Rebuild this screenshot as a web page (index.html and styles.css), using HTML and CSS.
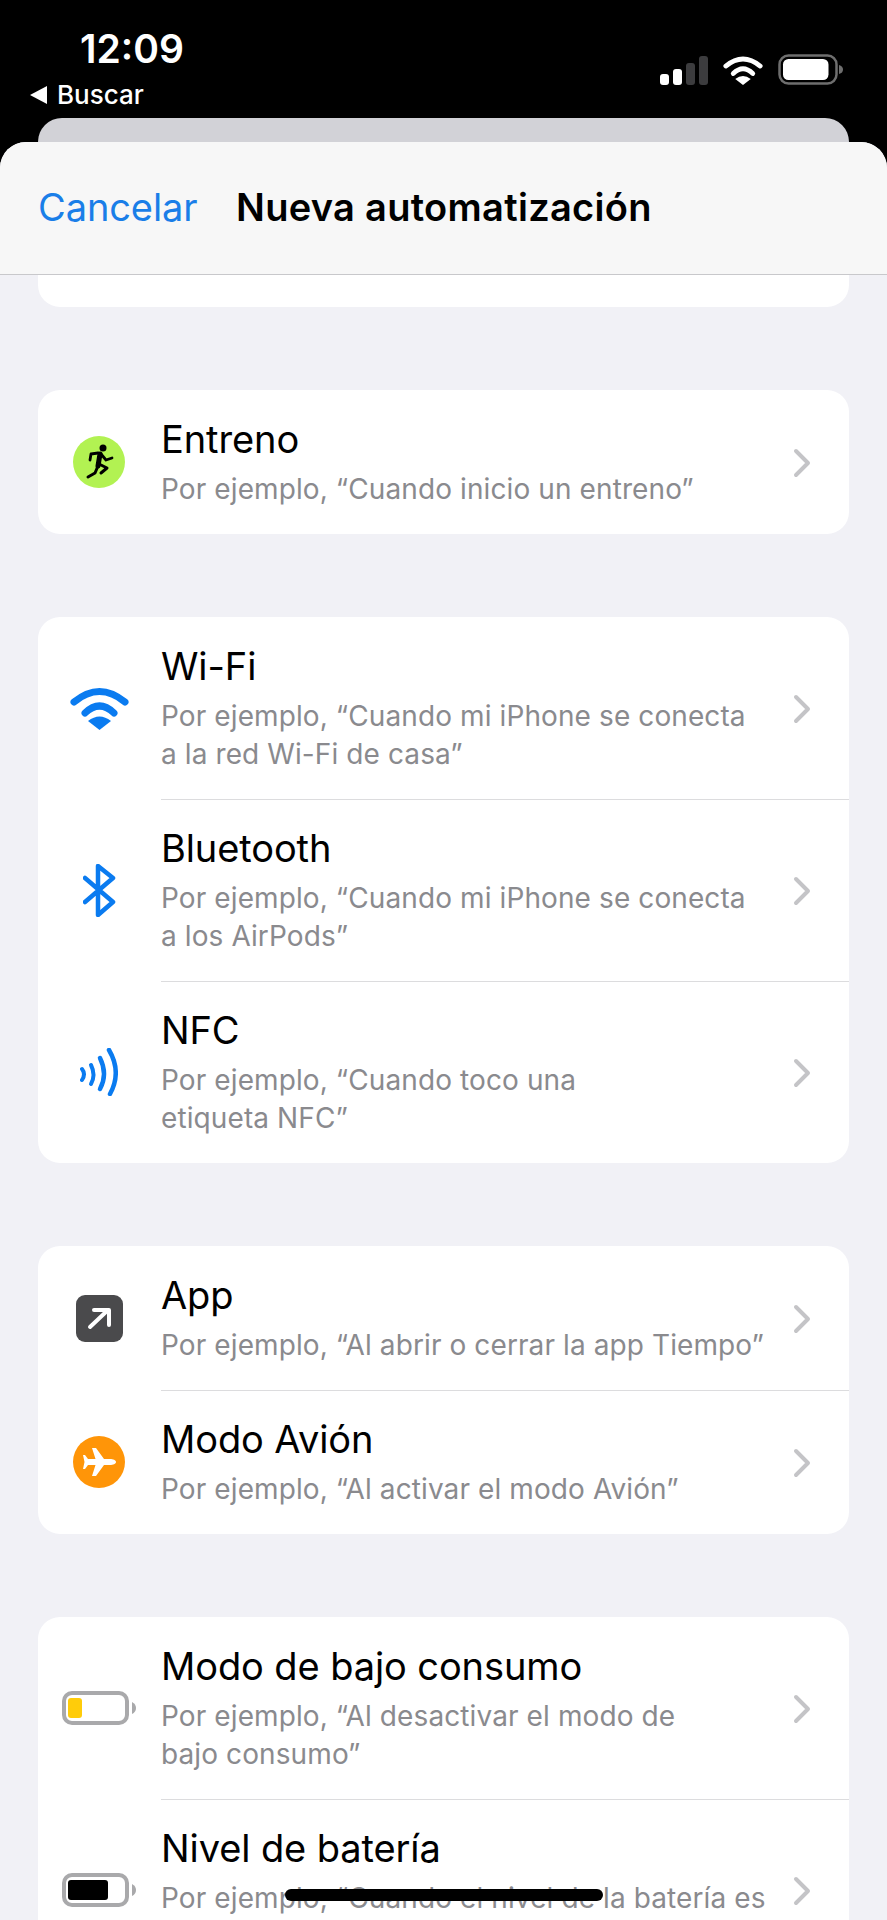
FILE: index.html
```html
<!DOCTYPE html>
<html lang="es">
<head>
<meta charset="utf-8">
<title>Nueva automatización</title>
<link rel="stylesheet" href="styles.css">
</head>
<body>
<div class="screen">
  <header class="status">
    <div class="status-left">
      <div class="time">12:09</div>
      <div class="back"><span class="back-tri"></span><span>Buscar</span></div>
    </div>
    <div class="status-right">
      <div class="bars"><i class="b1"></i><i class="b2"></i><i class="b3"></i><i class="b4"></i></div>
      <svg class="st-wifi" viewBox="0 0 59 43"><g fill="none" stroke="currentColor" stroke-width="7" stroke-linecap="round"><path d="M4 15Q29.500 -6 55 15"/><path d="M15 26Q29.500 12 44 26"/></g><path fill="currentColor" d="M29.500 43L18 34Q29.500 25 41 34Z"/></svg>
      <svg class="st-batt" viewBox="0 0 65 31"><rect x="1.500" y="1.500" width="57" height="28" rx="9" fill="none" stroke="#6e6e6e" stroke-width="2.500"/><rect x="5" y="5" width="45.500" height="21" rx="5.500" fill="#fff"/><path d="M61 11q4 1 4 4.500t-4 4.500z" fill="#6e6e6e"/></svg>
    </div>
  </header>
  <div class="behind"></div>
  <div class="sheet">
    <nav class="nav">
      <span class="cancel">Cancelar</span>
      <span class="nav-title">Nueva automatización</span>
    </nav>
    <div class="stub"></div>

    <section class="card">
      <div class="row">
        <div class="icon">
          <svg width="52" height="52" viewBox="0 0 52 52"><circle cx="26" cy="26" r="26" fill="#b2f252"/><circle cx="30" cy="12" r="3.500" fill="#000"/><g fill="none" stroke="#000" stroke-linecap="round" stroke-linejoin="round"><path stroke-width="5" d="M27 18L25 30"/><path stroke-width="2.800" d="M28 18L33 24L39 22M25 17L18 18L17 24"/><path stroke-width="3" d="M25 30L22 37L15 41M26 28L34 32L28 37"/></g></svg>
        </div>
        <div class="body">
          <div class="text"><div class="title">Entreno</div><div class="sub">Por ejemplo, “Cuando inicio un entreno”</div></div>
          <svg class="chev" viewBox="0 0 18 30"><path d="M3 3L15 15L3 27"/></svg>
        </div>
      </div>
    </section>

    <section class="card">
      <div class="row">
        <div class="icon">
          <svg class="blue" width="59" height="43" viewBox="0 0 59 43"><g fill="none" stroke="currentColor" stroke-width="7" stroke-linecap="round"><path d="M4 15Q29.500 -6 55 15"/><path d="M15 26Q29.500 12 44 26"/></g><path fill="currentColor" d="M29.500 43L18 34Q29.500 25 41 34Z"/></svg>
        </div>
        <div class="body">
          <div class="text"><div class="title">Wi-Fi</div><div class="sub">Por ejemplo, “Cuando mi iPhone se conecta<br>a la red Wi-Fi de casa”</div></div>
          <svg class="chev" viewBox="0 0 18 30"><path d="M3 3L15 15L3 27"/></svg>
        </div>
      </div>
      <div class="row">
        <div class="icon">
          <svg class="blue" width="33" height="53" viewBox="0 0 33 53"><path fill="none" stroke="currentColor" stroke-width="4.500" stroke-linecap="round" stroke-linejoin="round" d="M2 14L30 38L15 51V2L30 14L2 38"/></svg>
        </div>
        <div class="body">
          <div class="text"><div class="title">Bluetooth</div><div class="sub">Por ejemplo, “Cuando mi iPhone se conecta<br>a los AirPods”</div></div>
          <svg class="chev" viewBox="0 0 18 30"><path d="M3 3L15 15L3 27"/></svg>
        </div>
      </div>
      <div class="row">
        <div class="icon">
          <svg class="blue" width="38" height="48" viewBox="0 0 38 48"><g fill="none" stroke="currentColor" stroke-linecap="round"><path stroke-width="4.500" d="M29 2Q42 24 30 46"/><path stroke-width="4.500" d="M20 10Q28 26 20 41"/><path stroke-width="4" d="M11 17Q16 27 11 36"/><path stroke-width="4" d="M2 21Q6 26 2 32"/></g></svg>
        </div>
        <div class="body">
          <div class="text"><div class="title">NFC</div><div class="sub">Por ejemplo, “Cuando toco una<br>etiqueta NFC”</div></div>
          <svg class="chev" viewBox="0 0 18 30"><path d="M3 3L15 15L3 27"/></svg>
        </div>
      </div>
    </section>

    <section class="card">
      <div class="row">
        <div class="icon">
          <svg width="47" height="47" viewBox="0 0 47 47"><rect width="47" height="47" rx="9" fill="#4a4a4c"/><path fill="none" stroke="#fff" stroke-width="4" stroke-linecap="round" stroke-linejoin="round" d="M14 32L32 15M18 15H33V30"/></svg>
        </div>
        <div class="body">
          <div class="text"><div class="title">App</div><div class="sub">Por ejemplo, “Al abrir o cerrar la app Tiempo”</div></div>
          <svg class="chev" viewBox="0 0 18 30"><path d="M3 3L15 15L3 27"/></svg>
        </div>
      </div>
      <div class="row">
        <div class="icon">
          <svg width="52" height="52" viewBox="0 0 52 52"><circle cx="26" cy="26" r="26" fill="#ff9508"/><path fill="#fff" d="M43 26c0-2-3-3-6-3h-6L23 12h-4l3.500 11H15l-3-4h-2l1.500 7L10 33h2l3-4h7.500L19 40h4l8-11h6c3 0 6-1 6-3z"/></svg>
        </div>
        <div class="body">
          <div class="text"><div class="title">Modo Avión</div><div class="sub">Por ejemplo, “Al activar el modo Avión”</div></div>
          <svg class="chev" viewBox="0 0 18 30"><path d="M3 3L15 15L3 27"/></svg>
        </div>
      </div>
    </section>

    <section class="card">
      <div class="row">
        <div class="icon">
          <svg width="74" height="34" viewBox="0 0 74 34"><rect x="2" y="2" width="63" height="30" rx="8" fill="none" stroke="#a9a9ab" stroke-width="4"/><rect x="6" y="7" width="14" height="20" rx="3" fill="#ffcc0a"/><path d="M70 11q4 2 4 6t-4 6z" fill="#a9a9ab"/></svg>
        </div>
        <div class="body">
          <div class="text"><div class="title">Modo de bajo consumo</div><div class="sub">Por ejemplo, “Al desactivar el modo de<br>bajo consumo”</div></div>
          <svg class="chev" viewBox="0 0 18 30"><path d="M3 3L15 15L3 27"/></svg>
        </div>
      </div>
      <div class="row row-tall">
        <div class="icon">
          <svg width="74" height="34" viewBox="0 0 74 34"><rect x="2" y="2" width="63" height="30" rx="8" fill="none" stroke="#a9a9ab" stroke-width="4"/><rect x="6" y="7" width="40" height="20" rx="3" fill="#000"/><path d="M70 11q4 2 4 6t-4 6z" fill="#a9a9ab"/></svg>
        </div>
        <div class="body">
          <div class="text"><div class="title">Nivel de batería</div><div class="sub">Por ejemplo, “Cuando el nivel de la batería es</div></div>
          <svg class="chev" viewBox="0 0 18 30"><path d="M3 3L15 15L3 27"/></svg>
        </div>
      </div>
    </section>
  </div>
  <div class="home"></div>
</div>
</body>
</html>
```
FILE: styles.css
```css
* { box-sizing: border-box; }
html, body { margin: 0; padding: 0; }
body { font-family: Inter, "Liberation Sans", sans-serif; background: #000; }
.screen { position: relative; width: 887px; height: 1920px; overflow: hidden; background: #000; }

.status { height: 118px; display: flex; justify-content: space-between; color: #fff; }
.status-left { padding: 26px 0 0 30px; }
.time { margin-left: 50px; font-size: 39px; line-height: 46px; font-weight: 600; letter-spacing: 0; }
.back { display: flex; align-items: center; gap: 10px; font-size: 26px; line-height: 30px; margin-top: 8px; font-weight: 500; }
.back-tri { width: 0; height: 0; border-style: solid; border-width: 9px 17px 9px 0; border-color: transparent #fff transparent transparent; }
.status-right { display: flex; align-items: flex-start; padding: 54px 44px 0 0; }
.bars { display: flex; align-items: flex-end; gap: 4px; height: 30px; margin-top: 1px; }
.bars i { display: block; width: 9px; border-radius: 3px; background: #3c3c3e; }
.bars .b1 { height: 11px; background: #fff; }
.bars .b2 { height: 16px; background: #fff; }
.bars .b3 { height: 22px; }
.bars .b4 { height: 29px; }
.st-wifi { width: 40px; height: 29px; margin: 2px 15px 0 15px; }
.st-batt { width: 65px; height: 31px; }

.behind { height: 24px; margin: 0 38px; background: #d2d2d7; border-radius: 24px 24px 0 0; }
.sheet { background: #f1f1f6; border-radius: 26px 26px 0 0; overflow: hidden; height: 1778px; }
.nav { height: 133px; display: flex; align-items: center; padding: 0 0 2px 38px; background: #f7f7f7; border-bottom: 1px solid #c8c8cb; font-size: 38px; }
.cancel { color: #1a7ee8; width: 198px; letter-spacing: -0.1px; }
.nav-title { color: #000; font-weight: 600; letter-spacing: 0.3px; }
.stub { height: 32px; margin: 0 38px 83px; background: #fff; border-radius: 0 0 22px 22px; }

.card { margin: 0 38px 83px; background: #fff; border-radius: 22px; overflow: hidden; }
.row { display: flex; align-items: center; }
.icon { width: 122px; margin-right: 1px; flex: none; display: flex; justify-content: center; align-items: center; }
.icon svg { display: block; }
.blue { color: #0a7bf0; }
.body { flex: 1; display: flex; justify-content: space-between; align-items: center; padding: 27px 38px 26px 0; border-top: 1px solid #dcdcde; }
.row:first-child .body { border-top-color: transparent; }
.row-tall .text { padding-bottom: 38px; }
.title { font-size: 38px; line-height: 42px; color: #000; letter-spacing: -0.1px; }
.sub { font-size: 28px; line-height: 38px; margin-top: 10px; color: #8a8a8e; letter-spacing: 0.1px; white-space: nowrap; }
.chev { display: block; width: 18px; height: 30px; flex: none; }
.chev path { fill: none; stroke: #c4c4c7; stroke-width: 4; stroke-linecap: round; stroke-linejoin: round; }

.home { position: absolute; left: 285px; top: 1889px; width: 318px; height: 12px; border-radius: 6px; background: #000; }
```
